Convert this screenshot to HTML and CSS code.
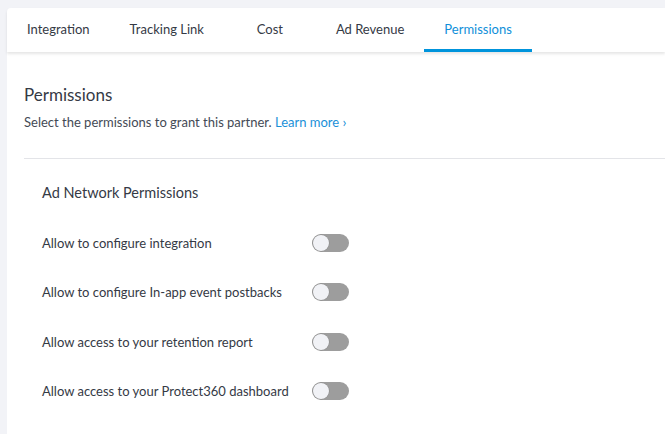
FILE: index.html
```html
<!DOCTYPE html>
<html>
<head>
<meta charset="utf-8">
<link rel="stylesheet" href="styles.css">
</head>
<body>
<div class="page">
  <nav class="tabs">
    <div class="tab">Integration</div>
    <div class="tab">Tracking Link</div>
    <div class="tab">Cost</div>
    <div class="tab">Ad Revenue</div>
    <div class="tab active">Permissions</div>
  </nav>
  <main class="card">
    <h1 class="title">Permissions</h1>
    <p class="subtitle">Select the permissions to grant this partner. <a class="link">Learn more <span class="chev">&#8250;</span></a></p>
    <hr class="divider">
    <section class="group">
      <h2 class="group-title">Ad Network Permissions</h2>
      <div class="rows">
        <div class="row"><span class="label">Allow to configure integration</span><span class="toggle"><span class="knob"></span></span></div>
        <div class="row"><span class="label">Allow to configure In-app event postbacks</span><span class="toggle"><span class="knob"></span></span></div>
        <div class="row"><span class="label">Allow access to your retention report</span><span class="toggle"><span class="knob"></span></span></div>
        <div class="row"><span class="label">Allow access to your Protect360 dashboard</span><span class="toggle"><span class="knob"></span></span></div>
      </div>
    </section>
  </main>
</div>
</body>
</html>
```
FILE: styles.css
```css
* { box-sizing: border-box; }
html, body { margin: 0; padding: 0; }
body {
  background: #f2f3f7;
  font-family: Lato, "Open Sans", sans-serif;
  color: #353a45;
  width: 665px;
  height: 434px;
  overflow: hidden;
}
.page {
  padding: 8px 0 0 7px;
  display: flex;
  flex-direction: column;
}
.tabs {
  position: relative;
  z-index: 1;
  display: flex;
  background: #fff;
  height: 44px;
  border-radius: 4px 0 0 0;
  box-shadow: 0 2px 3px rgba(0,0,0,0.10);
}
.tab {
  min-width: 92px;
  padding: 0 20px;
  display: flex;
  align-items: center;
  justify-content: center;
  font-size: 13px;
  color: #353a45;
  border-bottom: 3px solid transparent;
}
.tab.active {
  color: #0f8fd9;
  border-bottom-color: #0094dc;
}
.card {
  background: #fff;
  height: 382px;
  padding: 31px 0 0 17px;
}
.title {
  margin: 0;
  font-weight: 400;
  font-size: 17px;
  line-height: 24px;
  color: #353a45;
}
.subtitle {
  margin: 6px 0 0;
  font-size: 13px;
  line-height: 18px;
  color: #444a55;
}
.link { color: #1a90d8; }
.chev { font-size: 14px; }
.divider {
  margin: 27px 0 0;
  border: 0;
  border-top: 1px solid #e3e4e8;
}
.group { padding: 0 0 0 18px; }
.group-title {
  margin: 24px 0 0;
  font-weight: 400;
  font-size: 14.5px;
  line-height: 20px;
  color: #353a45;
}
.rows {
  margin-top: 15px;
  display: flex;
  flex-direction: column;
}
.row {
  display: flex;
  align-items: center;
  height: 49.5px;
}
.label {
  width: 270px;
  font-size: 13px;
  color: #353a45;
}
.toggle {
  width: 37px;
  height: 18px;
  border-radius: 9px;
  background: #9d9d9d;
  padding: 1px;
  display: flex;
}
.knob {
  width: 16px;
  height: 16px;
  border-radius: 50%;
  background: #f1f2f6;
  box-shadow: 0 0 0 0.5px #888;
}
```
